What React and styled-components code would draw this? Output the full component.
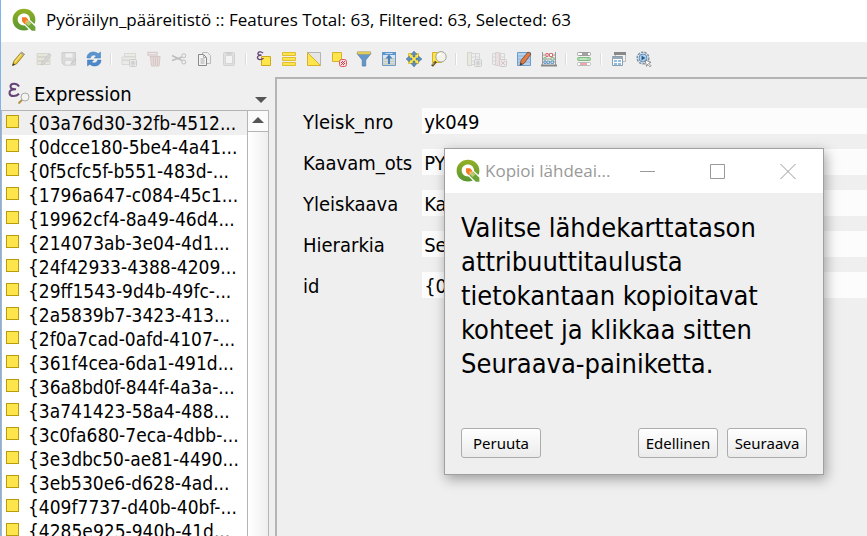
import React from "react";
import styled, { createGlobalStyle } from "styled-components";

const UI = '"DejaVu Sans Condensed", "Noto Sans", sans-serif';
const CAPTION = '"Open Sans", "Noto Sans", sans-serif';

const GlobalStyle = createGlobalStyle`
  *, *::before, *::after { box-sizing: border-box; }
  body { margin: 0; background: #efefef; color: #000; overflow: hidden; }
`;

const Window = styled.main`
  position: relative;
  display: flex;
  flex-direction: column;
  height: 100vh;
  border-left: 1px solid #7eb4ea;
  background: #efefef;
  font: 20px/24px ${UI};
  overflow: hidden;
`;

const TitleBar = styled.header`
  flex: none;
  display: flex;
  align-items: center;
  gap: 10px;
  height: 42px;
  padding: 0 11px 2px;
  background: #fff;
`;

const WindowTitle = styled.h1`
  margin: 0;
  font: 400 17px/24px ${CAPTION};
  white-space: nowrap;
`;

const Toolbar = styled.div`
  flex: none;
  display: flex;
  align-items: center;
  height: 35px;
  padding: 0 0 2px 5px;
`;

const ToolButton = styled.button`
  flex: none;
  display: grid;
  place-items: center;
  width: 25px;
  height: 25px;
  padding: 0;
  border: 0;
  background: transparent;
  &:disabled { opacity: 0.28; }
`;

const Separator = styled.span`
  flex: none;
  width: 2px;
  height: 12px;
  margin: 0 4px;
  background: #fff;
  border-left: 1px solid #dcdcdc;
`;

const Body = styled.div`
  flex: 1;
  display: flex;
  gap: 6px;
  min-height: 0;
`;

const Sidebar = styled.aside`
  flex: none;
  display: flex;
  flex-direction: column;
  width: 268px;
  min-height: 0;
`;

const ExpressionButton = styled.button`
  flex: none;
  display: flex;
  align-items: center;
  gap: 4px;
  height: 33px;
  padding: 0 2px 0 7px;
  border: 0;
  background: transparent;
  color: #000;
  font: inherit;
  text-align: left;
`;

const ExpressionLabel = styled.span`
  flex: 1;
`;

const Arrow = styled.svg`
  align-self: flex-end;
  margin-bottom: 7px;
`;

const ListFrame = styled.div`
  flex: 1;
  display: flex;
  min-height: 0;
  border: 1px solid #b4b4b4;
  border-bottom: 0;
  background: #fff;
`;

const FeatureList = styled.ul`
  flex: 1;
  min-width: 0;
  margin: 0;
  padding: 0;
  list-style: none;
  font-size: 19px;
  overflow: hidden;
`;

const FeatureRow = styled.li`
  display: flex;
  align-items: center;
  gap: 9px;
  height: 24px;
  padding-left: 4px;
  background: ${(p) => (p.$current ? "#efefef" : "#fff")};
  white-space: nowrap;
`;

const Swatch = styled.span`
  flex: none;
  width: 13px;
  height: 13px;
  margin-bottom: 3px;
  border: 1px solid #b99b0c;
  background: #fde64b;
`;

const ScrollBar = styled.div`
  flex: none;
  display: flex;
  flex-direction: column;
  width: 21px;
  border-left: 1px solid #b4b4b4;
  background: linear-gradient(90deg, #fff, #efefef);
`;

const ScrollUp = styled.button`
  display: grid;
  place-items: center;
  height: 21px;
  padding: 0 0 2px;
  border: 0;
  border-bottom: 1px solid #b4b4b4;
  background: #fbfbfb;
`;

const FormPanel = styled.form`
  flex: 1;
  display: grid;
  grid-template-columns: max-content 1fr;
  grid-auto-rows: 26px;
  align-content: start;
  gap: 15px 10px;
  min-width: 0;
  padding: 29px 0 0 26px;
  border: solid #b4b4b4;
  border-width: 2px 0 0 2px;
`;

const FieldLabel = styled.label`
  line-height: 28px;
`;

const Field = styled.input`
  width: 100%;
  min-width: 0;
  height: 26px;
  padding: 2px 2px 0;
  border: 0;
  background: #fcfcfc;
  color: #000;
  font: inherit;
`;

const Dialog = styled.section`
  position: absolute;
  left: 443px;
  top: 148px;
  width: 380px;
  border: 1px solid #a0a0a0;
  background: #efefef;
  box-shadow: 2px 4px 12px rgba(0, 0, 0, 0.35);
`;

const DialogBar = styled.header`
  display: flex;
  align-items: center;
  height: 44px;
  padding: 0 0 0 11px;
  background: #fff;
`;

const DialogTitle = styled.h2`
  flex: 1;
  margin: 0 0 0 5px;
  color: #999;
  font: 400 17px/24px ${CAPTION};
  white-space: nowrap;
`;

const CaptionButton = styled.button`
  display: grid;
  place-items: center;
  width: 70px;
  height: 44px;
  padding: 0;
  border: 0;
  background: transparent;
`;

const Message = styled.p`
  margin: 0;
  padding: 18px 16px 0;
  height: 235px;
  font-size: 27px;
  line-height: 34px;
  white-space: pre-line;
`;

const DialogActions = styled.footer`
  display: flex;
  gap: 9px;
  padding: 0 16px 16px;
`;

const PushButton = styled.button`
  width: 80px;
  height: 30px;
  padding: 0;
  border: 1px solid #acacac;
  border-radius: 3px;
  background: linear-gradient(#fff, #ebebeb);
  color: #000;
  font: 15px/20px "Noto Sans", sans-serif;
  &:first-child { margin-right: auto; }
`;

const Logo = () => (
  <svg width="24" height="24" viewBox="0 0 24 24" aria-hidden="true">
    <defs>
      <linearGradient id="ring" x1="0" y1="0" x2="0" y2="1">
        <stop offset="0" stopColor="#93b023" />
        <stop offset="1" stopColor="#589632" />
      </linearGradient>
    </defs>
    <path fill="url(#ring)" fillRule="evenodd" d="M12 0.800C5.600.8.6 5.500.6 11.800s5 10.800 11.400 10.800c1.700 0 3.300-.3 4.700-1l-4-4.200c-4 .3-7-2.200-7-5.800 0-3.500 2.700-6 6.200-6 3.600 0 6.300 2.700 6.200 6.500l4.300 4c.7-1.400 1-2.700 1-4.300C23.400 5.500 18.400.8 12 .8z" />
    <path fill="#6da334" d="M13.500 12.700h3.700l6.200 6v4h-3.600l-6.300-6.100z" />
    <path fill="#b7cc71" d="M14 13.100h3l2.400 2.300-2.800 2.600-2.800-2.700z" />
    <path fill="#f27a22" d="M10 9.200h4l2.200 2.300v1.300h-2.500V16h-1.200L10 13.200z" />
    <path fill="#f9b36f" d="m13.500 12.700 3 .2-2.800 2.800z" />
  </svg>
);

const Y = "#fde64b";
const G = "#cfa91d";

const Badge = ({ cross }) => (
  <>
    <rect x="8.500" y="8.500" width="7" height="7" rx="1" fill="#ddd" stroke="#777" />
    <path d={cross ? "m10 10 4 4m0-4-4 4" : "M12 9.500v5M9.500 12h5m-4-2 3 4m0-4-3 4"} stroke={cross ? "#b54b45" : "#777"} />
  </>
);

const art = {
  pencil: (
    <>
      <path d="m1.500 14.500 1.200-4.300L10.500 1l3 2.200-8 9.700z" fill="#e7c532" stroke="#8a7526" strokeWidth=".8" />
      <path d="m4 11 7.400-9" stroke="#fff0a0" />
      <path d="m10.500 1 3 2.200-1.200 1.500-3-2.200z" fill="#aaa" />
      <path d="m1.300 15 .8-2.800 1.900 1.300z" fill="#333" />
    </>
  ),
  multiEdit: (
    <>
      <path d="M1 2.500h13v3H1zM1 6.500h13v3H1zM1 10.500h13v3H1z" fill="#d0d0ae" stroke="#999979" />
      <path d="m5 14 1-3 7-8 2 1.500-7 8.500z" fill="#999" stroke="#555" strokeWidth=".7" />
    </>
  ),
  save: (
    <>
      <path d="M1 1.500h13.500V14H3L1 12z" fill="#aaa" stroke="#777" />
      <path d="M4 2h8v5H4zM4 9.500h7V14H4z" fill="#f5f5f5" stroke="#888" strokeWidth=".7" />
      <path d="m9 13 5-6 1.500 1-5 6z" fill="#777" />
    </>
  ),
  reload: (
    <>
      <path d="M1 7C1 3 4 1 7.500 1c2 0 3.500.7 4.700 1.800L14.500 1v6H8.300l2-2c-2-1.700-5.300-1-6 2z" fill="#5b95d0" stroke="#3c76b5" strokeWidth=".5" />
      <path d="M15 9c0 4-3 6-6.500 6-2 0-3.500-.7-4.700-1.800L1.500 15V9h6.200l-2 2c2 1.700 5.300 1 6-2z" fill="#4c88cb" stroke="#3c76b5" strokeWidth=".5" />
    </>
  ),
  addFeature: (
    <>
      <path d="M3.500 2.500h11v3h-11zM1 6h13.500v3H1zM1 9.500h12v4H1z" fill="#dedecf" stroke="#8f8f84" strokeWidth=".8" />
      <Badge />
    </>
  ),
  trash: (
    <>
      <path d="M2 3V1.500h9V3M1 4h11" fill="none" stroke="#a57d77" strokeWidth="1.500" />
      <path d="M4.500 6h9.500l-1 9H5.500z" fill="#d3a8a2" stroke="#97655e" />
      <path d="M3.500 5.500h11M7.500 7v7M9.500 7v7M11.500 7v7" stroke="#97655e" />
    </>
  ),
  cut: (
    <g fill="none" stroke="#444">
      <path d="m1 4.500 10 5M1 9.500 11 6" strokeWidth="1.500" />
      <circle cx="12.800" cy="4.700" r="2" />
      <circle cx="12.800" cy="11" r="2" />
    </g>
  ),
  copy: (
    <>
      <path d="M6.500 1.500h5l3 3v8h-8z" fill="#eee" stroke="#bbb" />
      <path d="M2.500 3.500h5l3 3v8h-8z" fill="#f4f4f4" stroke="#888" />
      <path d="M7.500 3.500v3h3M4.500 8h4m-4 2h4m-4 2h4" fill="none" stroke="#aaa" />
    </>
  ),
  paste: (
    <>
      <rect x="2.500" y="1.500" width="11" height="13" rx="1" fill="#bbb" stroke="#888" />
      <path d="M4.500 4.500h7v8h-7z" fill="#fff" stroke="#999" />
      <path d="M5.500 1h5v2.500h-5z" fill="#777" />
    </>
  ),
  selectExpr: (
    <>
      <path d="M5.500 5.500h9v9h-9z" fill={Y} stroke={G} />
      <path d="M7 2.200C5-.2 1.500 1 2 3c.3 1.200 2 1.300 3.500 1.200C3 4.200 1 5.300 1.500 7c.6 2 4 2 6 .2" fill="none" stroke="#634276" strokeWidth="1.300" />
    </>
  ),
  selectAll: <path d="M1.500 1.500h13v3h-13zM1.500 6.500h13v3h-13zM1.500 11.500h13v3h-13z" fill={Y} stroke="#e0bd35" />,
  invert: (
    <>
      <path d="M1.500 1.500h13v13z" fill="#e6e6e6" stroke="#b4b4b4" />
      <path d="M1.500 1.500v13h13z" fill={Y} stroke="#d6b22c" />
    </>
  ),
  deselect: (
    <>
      <path d="M1.500 1.500h9v9h-9z" fill={Y} stroke="#d6b22c" />
      <rect x="8.500" y="8.500" width="7" height="7" rx="2" fill="#f9dedf" stroke="#dc5960" />
      <path d="m10 14 4-4M10 12l2-2M12 14l2-2" stroke="#d83a42" />
    </>
  ),
  filter: (
    <>
      <path d="M1 2.500 6.300 9v6h3.400V9L15 2.500z" fill="#6697ca" stroke="#4f7dac" strokeWidth=".8" />
      <path d="M1.500.8h13v2.400h-13z" fill="#f4dc51" stroke="#a9a070" strokeWidth=".8" />
    </>
  ),
  moveTop: (
    <>
      <path d="M1.500 1.500h13v13h-13z" fill="#d8e6f3" stroke="#6c9ccb" />
      <path d="M1 1h14v3H1z" fill="#5f95ca" />
      <path d="M2 8h12M2 10.500h12M2 13h12" stroke="#c9cab4" strokeWidth="1.300" />
      <path d="M8 3.500 4.500 7.500H7V13h2V7.500h2.500z" fill="#4781b9" />
      <path d="M4.500 2.500h7" stroke="#bedaf1" />
    </>
  ),
  pan: (
    <>
      <path d="M2.500 2.500h10v10h-10z" fill={Y} stroke="#e0bd35" />
      <path d="m8 0 3 3.500H9V6H7V3.500H5zM8 16l3-3.500H9V10H7v2.500H5zM0 8l3.500-3v2H6v2H3.500v2zM16 8l-3.500-3v2H10v2h2.500v2z" fill="#5f8dbc" stroke="#46709c" strokeWidth=".5" />
    </>
  ),
  zoomSel: (
    <>
      <path d="M1.500 1.500h9v10h-9z" fill={Y} stroke="#d6b22c" />
      <path d="m1 15 4-4.500" stroke="#55482e" strokeWidth="2.500" />
      <path d="m1.500 14 2-2.300" stroke="#e7c532" />
      <circle cx="10" cy="5.800" r="5.200" fill="#f3f3e9" stroke="#a2a29a" />
      <path d="M7 5a3 3 0 0 1 3-2" fill="none" stroke="#fff" strokeWidth="1.500" />
    </>
  ),
  newField: (
    <>
      <path d="M1.500 1.500h4v13h-4z" fill="#d8dfb5" stroke="#87906a" />
      <path d="M5.500 2.500h8v11h-8zM9.500 2v12M5.500 6h8M5.500 10h8" fill="#eee" stroke="#999" />
      <Badge />
    </>
  ),
  deleteField: (
    <>
      <path d="M1.500 2.500h12v11h-12zM1.500 6h12M1.500 10h12M9.500 2v12" fill="#eee" stroke="#999" />
      <path d="M4.500 1.500h4v13h-4z" fill="#ddb7b7" stroke="#a18484" />
      <Badge cross />
    </>
  ),
  editTable: (
    <>
      <path d="M1.500 1.500h13v13h-13z" fill="#b7d2eb" stroke="#6c9ccb" />
      <path d="M2 5h12M2 8h12M2 11h12" stroke="#8ab2d9" />
      <path d="m4 14 1-4.500L12 1l3 2-7 9.500z" fill="#e17b45" stroke="#76452e" strokeWidth=".8" />
      <path d="m4 14.500.7-2.800 2 1.500z" fill="#333" />
    </>
  ),
  calculator: (
    <>
      <path d="M1.500 1v13M14.500 1v13M1 4h14M1 8h14M1 11h14" stroke="#999" />
      <g strokeWidth=".8">
        <path d="M5 2.500h2v3H5zM8.500 2.500h3v3h-3z" fill="#fff" stroke="#d54c52" />
        <path d="M3 6.500h2v2.500H3zM10 6.500h3v2.500h-3z" fill="#d9edd9" stroke="#7cac80" />
        <path d="M3 10h2v2.500H3zM6 10h2.500v2.500H6zM10 10h2.500v2.500H10z" fill="#cde1f2" stroke="#568bbb" />
      </g>
      <path d="M0 14.500h16" stroke="#888" strokeWidth="2" />
    </>
  ),
  conditional: (
    <>
      <rect x="1.500" y="1.500" width="13" height="3" rx="1" fill="#fff" stroke="#9d9d9d" />
      <rect x="1.500" y="6.500" width="13" height="3" rx="1" fill="#a5dba3" stroke="#83b985" />
      <rect x="1.500" y="11.500" width="13" height="3" rx="1" fill="#fff" stroke="#bbb" />
      <path d="M6 3h6" stroke="#444" />
      <path d="M4 8h7" stroke="#d4eed3" />
      <path d="M4 13h7" stroke="#dc4d52" />
    </>
  ),
  dock: (
    <>
      <path d="M4.500 1.500h10v9h-10z" fill="#f2f2f2" stroke="#bbb" />
      <path d="M3 1h12v3H3z" fill="#888" />
      <path d="M1.500 5.500h10v9h-10z" fill="#fff" stroke="#8b9dad" />
      <path d="M1 6h11v2H1z" fill="#9aa9b6" />
      <path d="M3 9h3v2H3zM7 9h3v2H7zM3 12h3v2H3zM7 12h3v2H7z" fill="#8fbce3" />
    </>
  ),
  actions: (
    <>
      <circle cx="7" cy="7" r="5.800" fill="#e8eef4" stroke="#85919d" strokeWidth="1.500" strokeDasharray="2.500 1" />
      <circle cx="7" cy="7" r="4" fill="#b8d2e8" stroke="#5e90bf" />
      <path d="M5.500 4.500v5l4-2.500z" fill="#245f99" />
      <path d="m9 9 6 2.300-2.300 1 2.300 2.500-1 1-2.400-2.500-1 2z" fill="#fff" stroke="#777" strokeWidth=".8" />
    </>
  ),
};

const tools = [
  ["pencil", "Toggle editing mode"],
  ["multiEdit", "Toggle multi edit mode", true],
  ["save", "Save edits", true],
  ["reload", "Reload the table"],
  null,
  ["addFeature", "Add feature", true],
  ["trash", "Delete selected features", true],
  ["cut", "Cut selected rows", true],
  ["copy", "Copy selected rows"],
  ["paste", "Paste features", true],
  null,
  ["selectExpr", "Select features using an expression"],
  ["selectAll", "Select all"],
  ["invert", "Invert selection"],
  ["deselect", "Deselect all"],
  ["filter", "Filter features"],
  ["moveTop", "Move selection to top"],
  ["pan", "Pan map to selected rows"],
  ["zoomSel", "Zoom map to selected rows"],
  null,
  ["newField", "New field", true],
  ["deleteField", "Delete field", true],
  ["editTable", "Organize columns"],
  ["calculator", "Open field calculator"],
  null,
  ["conditional", "Conditional formatting"],
  null,
  ["dock", "Dock attribute table"],
  ["actions", "Actions"],
];

const features = [
  "{03a76d30-32fb-4512...",
  "{0dcce180-5be4-4a41...",
  "{0f5cfc5f-b551-483d-...",
  "{1796a647-c084-45c1...",
  "{19962cf4-8a49-46d4...",
  "{214073ab-3e04-4d1...",
  "{24f42933-4388-4209...",
  "{29ff1543-9d4b-49fc-...",
  "{2a5839b7-3423-413...",
  "{2f0a7cad-0afd-4107-...",
  "{361f4cea-6da1-491d...",
  "{36a8bd0f-844f-4a3a-...",
  "{3a741423-58a4-488...",
  "{3c0fa680-7eca-4dbb-...",
  "{3e3dbc50-ae81-4490...",
  "{3eb530e6-d628-4ad...",
  "{409f7737-d40b-40bf-...",
  "{4285e925-940b-41d...",
];

const fields = [
  ["Yleisk_nro", "yk049"],
  ["Kaavam_ots", "PY"],
  ["Yleiskaava", "Ka"],
  ["Hierarkia", "Se"],
  ["id", "{0"],
];

const message = `Valitse lähdekarttatason
attribuuttitaulusta
tietokantaan kopioitavat
kohteet ja klikkaa sitten
Seuraava-painiketta.`;

export default function App() {
  return (
    <>
      <GlobalStyle />
      <Window>
        <TitleBar>
          <Logo />
          <WindowTitle>Pyöräilyn_pääreitistö :: Features Total: 63, Filtered: 63, Selected: 63</WindowTitle>
        </TitleBar>
        <Toolbar role="toolbar" aria-label="Attribute table">
          {tools.map((tool, i) =>
            tool ? (
              <ToolButton key={tool[0]} type="button" aria-label={tool[1]} disabled={tool[2]}>
                <svg width="16" height="16" viewBox="0 0 16 16">{art[tool[0]]}</svg>
              </ToolButton>
            ) : (
              <Separator key={i} />
            )
          )}
        </Toolbar>
        <Body>
          <Sidebar>
            <ExpressionButton type="button">
              <svg width="22" height="24" viewBox="0 0 22 24" aria-hidden="true">
                <path d="M11 4.500C8.500.5 2.500 1 2.500 4.500c0 2.200 2.500 3 5.500 2.700-4-.2-7 1.300-6.500 4.300.6 3.300 6.500 3.500 9.500.3" fill="none" stroke="#634276" strokeWidth="2" />
                <path d="m10.500 21.500 4-4" stroke="#b89045" strokeWidth="2" />
                <circle cx="17" cy="15" r="4" fill="#f3f3f0" stroke="#aaa" />
              </svg>
              <ExpressionLabel>Expression</ExpressionLabel>
              <Arrow width="12" height="6" viewBox="0 0 12 6"><path d="M0 0h12L6 6z" fill="#555" /></Arrow>
            </ExpressionButton>
            <ListFrame>
              <FeatureList>
                {features.map((name, i) => (
                  <FeatureRow key={name} $current={i === 0}>
                    <Swatch />
                    {name}
                  </FeatureRow>
                ))}
              </FeatureList>
              <ScrollBar>
                <ScrollUp type="button" aria-label="Scroll up">
                  <svg width="12" height="6" viewBox="0 0 12 6"><path d="M0 6h12L6 0z" fill="#555" /></svg>
                </ScrollUp>
              </ScrollBar>
            </ListFrame>
          </Sidebar>
          <FormPanel>
            {fields.map(([name, value]) => (
              <React.Fragment key={name}>
                <FieldLabel htmlFor={name}>{name}</FieldLabel>
                <Field id={name} defaultValue={value} readOnly />
              </React.Fragment>
            ))}
          </FormPanel>
        </Body>
        <Dialog role="dialog" aria-labelledby="dialog-title">
          <DialogBar>
            <Logo />
            <DialogTitle id="dialog-title">Kopioi lähdeai...</DialogTitle>
            <CaptionButton type="button" aria-label="Minimize">
              <svg width="16" height="16" viewBox="0 0 16 16"><path d="M0 8.500h15" stroke="#999" /></svg>
            </CaptionButton>
            <CaptionButton type="button" aria-label="Maximize">
              <svg width="16" height="16" viewBox="0 0 16 16"><path d="M.5 1.500h14v14H.5z" fill="none" stroke="#999" /></svg>
            </CaptionButton>
            <CaptionButton type="button" aria-label="Close">
              <svg width="16" height="16" viewBox="0 0 16 16"><path d="m.5 1 15 15m0-15-15 15" stroke="#999" /></svg>
            </CaptionButton>
          </DialogBar>
          <Message>{message}</Message>
          <DialogActions>
            <PushButton type="button">Peruuta</PushButton>
            <PushButton type="button">Edellinen</PushButton>
            <PushButton type="button">Seuraava</PushButton>
          </DialogActions>
        </Dialog>
      </Window>
    </>
  );
}
